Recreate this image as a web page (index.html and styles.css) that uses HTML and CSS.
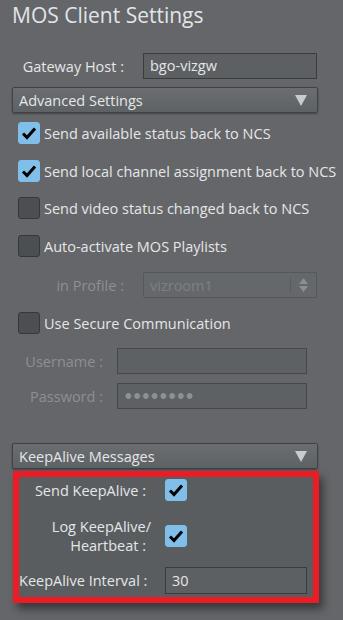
FILE: index.html
```html
<!DOCTYPE html>
<html>
<head>
<meta charset="utf-8">
<link rel="stylesheet" href="styles.css">
</head>
<body>
<div class="page">
  <h1 class="title">MOS Client Settings</h1>

  <div class="row gateway">
    <span class="label">Gateway Host :</span>
    <div class="input">bgo-vizgw</div>
  </div>

  <div class="dropdown adv">
    <span>Advanced Settings</span>
    <svg class="arrow" width="12" height="11" viewBox="0 0 12 11"><path d="M0 0H12L6 11Z" fill="#c9cbcd"/></svg>
  </div>

  <div class="check first">
    <span class="box on"><svg width="22" height="22" viewBox="0 0 22 22"><path d="M5 11.5L9 15.5L17 6.5" fill="none" stroke="#000" stroke-width="3"/></svg></span>
    <span class="ctext">Send available status back to NCS</span>
  </div>
  <div class="check c2">
    <span class="box on"><svg width="22" height="22" viewBox="0 0 22 22"><path d="M5 11.5L9 15.5L17 6.5" fill="none" stroke="#000" stroke-width="3"/></svg></span>
    <span class="ctext">Send local channel assignment back to NCS</span>
  </div>
  <div class="check c3">
    <span class="box"></span>
    <span class="ctext">Send video status changed back to NCS</span>
  </div>
  <div class="check c4">
    <span class="box"></span>
    <span class="ctext">Auto-activate MOS Playlists</span>
  </div>

  <div class="row profile">
    <span class="label dis">in Profile :</span>
    <div class="select">
      <span>vizroom1</span>
      <span class="spin">
        <svg width="9" height="14" viewBox="0 0 9 14"><path d="M4.5 0L9 6H0Z M0 8H9L4.5 14Z" fill="#8c8f92"/></svg>
      </span>
    </div>
  </div>

  <div class="check c5">
    <span class="box"></span>
    <span class="ctext">Use Secure Communication</span>
  </div>

  <div class="row cred user">
    <span class="label dis">Username :</span>
    <div class="input dinput"></div>
  </div>
  <div class="row cred pass">
    <span class="label dis">Password :</span>
    <div class="input dinput"><span class="dots"></span></div>
  </div>

  <div class="dropdown keep">
    <span>KeepAlive Messages</span>
    <svg class="arrow" width="12" height="11" viewBox="0 0 12 11"><path d="M0 0H12L6 11Z" fill="#c9cbcd"/></svg>
  </div>

  <div class="group">
    <div class="grow k1">
      <span class="glabel">Send KeepAlive :</span>
      <span class="box on"><svg width="22" height="22" viewBox="0 0 22 22"><path d="M5 11.5L9 15.5L17 6.5" fill="none" stroke="#000" stroke-width="3"/></svg></span>
    </div>
    <div class="grow k2">
      <span class="glabel"><span class="l1">Log KeepAlive/</span><span class="l2">Heartbeat :</span></span>
      <span class="box on"><svg width="22" height="22" viewBox="0 0 22 22"><path d="M5 11.5L9 15.5L17 6.5" fill="none" stroke="#000" stroke-width="3"/></svg></span>
    </div>
    <div class="grow k3">
      <span class="glabel">KeepAlive Interval :</span>
      <div class="input ginput">30</div>
    </div>
  </div>
</div>
</body>
</html>
```

FILE: styles.css
```css
html, body {
  margin: 0;
  padding: 0;
  background: #646669;
}
body {
  font-family: "Open Sans", "Noto Sans", sans-serif;
  font-size: 14.5px;
  color: #e4e6e8;
  width: 343px;
  height: 620px;
  overflow: hidden;
}
.page {
  padding: 0 0 0 12px;
}
.title {
  margin: 0;
  padding-top: 1px;
  height: 29px;
  line-height: 29px;
  font-size: 21px;
  font-weight: normal;
  color: #e2e5e8;
}
.row {
  display: flex;
  align-items: center;
}
.label {
  text-align: right;
  box-sizing: border-box;
  white-space: nowrap;
}
.dis { color: #8d9093; }
.gateway { margin-top: 23px; }
.gateway .label, .profile .label { width: 112px; }
.input {
  box-sizing: border-box;
  height: 26px;
  line-height: 24px;
  border: 1px solid #3a3c3e;
  background: #5d6063;
  padding: 0 6px;
  color: #e4e6e8;
}
.gateway .input { margin-left: 19px; width: 174px; }
.dropdown {
  box-sizing: border-box;
  width: 306px;
  height: 26px;
  border: 1px solid #404245;
  border-radius: 2px;
  background: linear-gradient(#6b6e71, #5f6265);
  box-shadow: 0 1px 2px rgba(0,0,0,0.35);
  display: flex;
  align-items: center;
  justify-content: space-between;
  padding: 0 10px 0 6px;
  color: #e4e6e8;
}
.adv { margin-top: 8px; }
.check {
  display: flex;
  align-items: center;
  height: 22px;
  padding-left: 6px;
}
.first { margin-top: 9px; }
.c2 { margin-top: 16px; }
.c3 { margin-top: 15px; }
.c4 { margin-top: 16px; }
.c5 { margin-top: 14px; }
.box {
  box-sizing: border-box;
  width: 22px;
  height: 22px;
  border-radius: 3px;
  border: 1px solid #36383a;
  background: #4c4f52;
  flex: none;
  display: block;
}
.box svg { display: block; margin: -1px; }
.box.on {
  background: #7fbfe9;
  border-color: #7fbfe9;
}
.ctext { margin-left: 4px; white-space: nowrap; }
.profile { margin-top: 15px; }
.select {
  box-sizing: border-box;
  margin-left: 19px;
  width: 174px;
  height: 26px;
  border: 1px solid #55585b;
  border-radius: 2px;
  background: #65686b;
  display: flex;
  align-items: center;
  justify-content: space-between;
  padding-left: 6px;
  color: #7d8083;
}
.spin {
  height: 14px;
  border-left: 1px solid #595c5f;
  padding: 0 8px 0 8px;
  display: flex;
  align-items: center;
}
.spin svg { display: block; }
.cred .label { width: 91px; }
.user { margin-top: 14px; }
.pass { margin-top: 9px; }
.dinput {
  margin-left: 14px;
  width: 190px;
  background: #5e6164;
  border-color: #46494c;
  display: flex;
  align-items: center;
}
.dots {
  display: block;
  width: 70px;
  height: 6px;
  background: radial-gradient(circle, #8e9194 2.6px, rgba(142,145,148,0) 3.2px) 0 0 / 8.75px 6px repeat-x;
}
.keep { margin-top: 34px; }
.group {
  box-sizing: border-box;
  margin-top: 2px;
  margin-left: 1px;
  width: 306px;
  height: 132px;
  border: 6px solid #ec1c24;
  background: #5a5d60;
  box-shadow: 4px 6px 8px rgba(0,0,0,0.45);
  padding-top: 2px;
}
.grow {
  display: flex;
  align-items: center;
}
.glabel {
  width: 132px;
  box-sizing: border-box;
  padding-right: 5px;
  text-align: right;
  margin-right: 14px;
  flex: none;
  white-space: nowrap;
}
.k1 { height: 22px; }
.k2 { margin-top: 16px; }
.k2 .glabel { line-height: 19px; }
.l1, .l2 { display: block; }
.l1 { margin-right: -5px; }
.k3 { margin-top: 12px; }
.ginput { width: 142px; height: 27px; line-height: 25px; }
```
